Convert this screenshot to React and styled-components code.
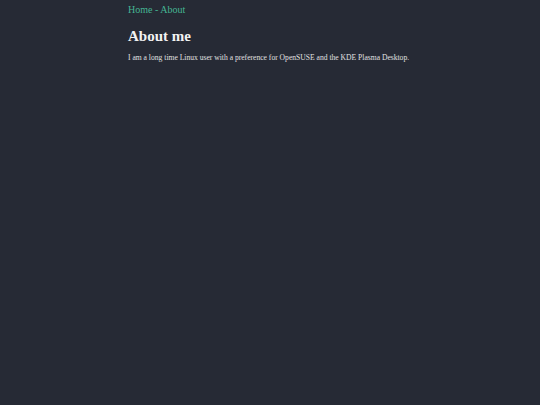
import React from "react";
import styled, { createGlobalStyle } from "styled-components";

const Global = createGlobalStyle`
  html, body { margin: 0; padding: 0; background: #262a35; }
  body { font-family: "Liberation Serif", "Times New Roman", serif; color: #e6e6e6; min-height: 405px; }
`;

const Page = styled.main`
  width: 284px;
  margin: 0 auto;
  padding-top: 3px;
`;

const Nav = styled.nav`
  font-size: 10px;
  line-height: 13px;
  color: #45b593;
  white-space: pre;
`;

const NavLink = styled.a`
  color: #45b593;
  text-decoration: none;
`;

const Title = styled.h1`
  font-size: 15px;
  font-weight: bold;
  color: #f2f2f2;
  margin: 11px 0 0;
  line-height: 18px;
`;

const Text = styled.p`
  font-size: 7.6px;
  line-height: 10px;
  color: #e0e0e0;
  margin: 8px 0 0;
`;

export default function App() {
  return (
    <>
      <Global />
      <Page>
        <Nav>
          <NavLink href="#">Home</NavLink>
          {" - "}
          <NavLink href="#">About</NavLink>
        </Nav>
        <Title>About me</Title>
        <Text>I am a long time Linux user with a preference for OpenSUSE and the KDE Plasma Desktop.</Text>
      </Page>
    </>
  );
}
